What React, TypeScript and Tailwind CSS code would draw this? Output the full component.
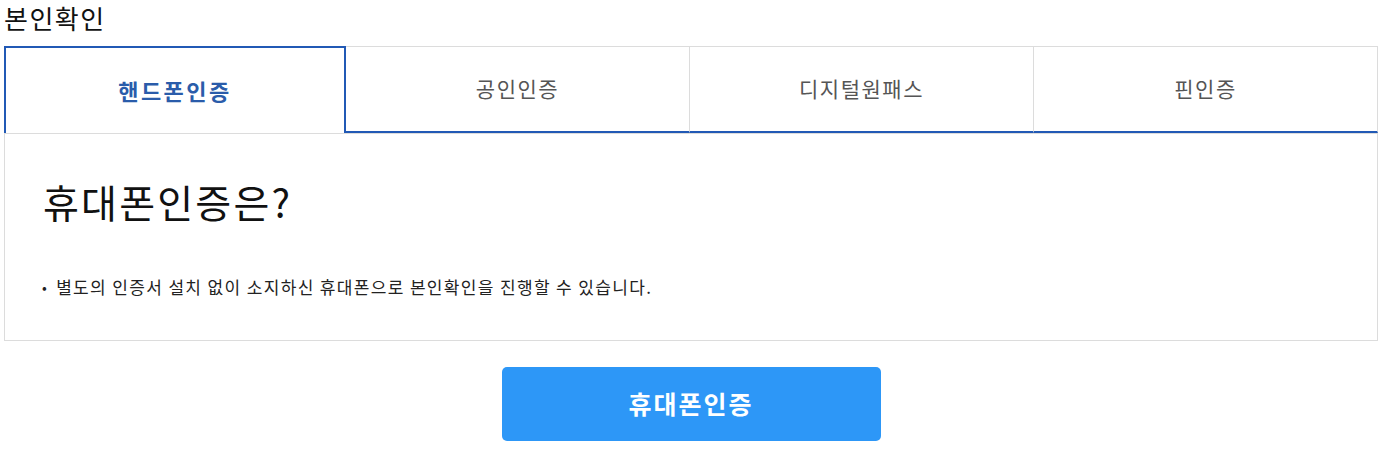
import React, { useState } from 'react';

const tabs = ['핸드폰인증', '공인인증', '디지털원패스', '핀인증'];

export default function App() {
  const [active, setActive] = useState(0);

  return (
    <div
      className="w-[1384px] h-[453px] bg-white text-[#222]"
      style={{ fontFamily: '"Noto Sans CJK KR", "Noto Sans", sans-serif' }}
    >
      <div className="h-[46px] pt-[1px]">
        <h2 className="pl-[4px] text-[26px] leading-[34px] tracking-[1.5px] font-normal text-[#111]">본인확인</h2>
      </div>

      <div className="ml-[4px] w-[1374px]">
        {/* tabs */}
        <div className="grid grid-cols-[342px_344px_344px_344px] h-[87px] border-t border-[#dcdcdc]">
          {tabs.map((t, i) => {
            const on = i === active;
            return (
              <button
                key={t}
                onClick={() => setActive(i)}
                className={
                  on
                    ? '-mt-px flex items-center justify-center border-2 border-b-0 border-[#2159b5] bg-white text-[22px] tracking-[2.5px] font-bold text-[#2a5caa]'
                    : 'flex items-center justify-center border-r border-[#dcdcdc] border-b-2 border-b-[#2159b5] bg-white text-[21px] tracking-[1.5px] text-[#555]'
                }
              >
                <span>{t}</span>
              </button>
            );
          })}
        </div>

        {/* content */}
        <div className="h-[208px] border border-[#dcdcdc] px-[38px] pt-[41px]">
          <h3 className="text-[39px] leading-[52px] font-normal text-[#111] tracking-[2.2px]">휴대폰인증은?</h3>
          <ul className="mt-[48px]">
            <li className="flex items-center gap-[8px] text-[17px] leading-[24px] tracking-[1.35px] text-[#222] -ml-[1px]">
              <span className="text-[14px]">•</span>
              별도의 인증서 설치 없이 소지하신 휴대폰으로 본인확인을 진행할 수 있습니다.
            </li>
          </ul>
        </div>
      </div>

      <div className="flex justify-center mt-[26px]">
        <button className="w-[379px] h-[74px] ml-[-2px] rounded-[5px] bg-[#2d97f7] text-white text-[25px] tracking-[2px] font-bold">
          휴대폰인증
        </button>
      </div>
    </div>
  );
}
